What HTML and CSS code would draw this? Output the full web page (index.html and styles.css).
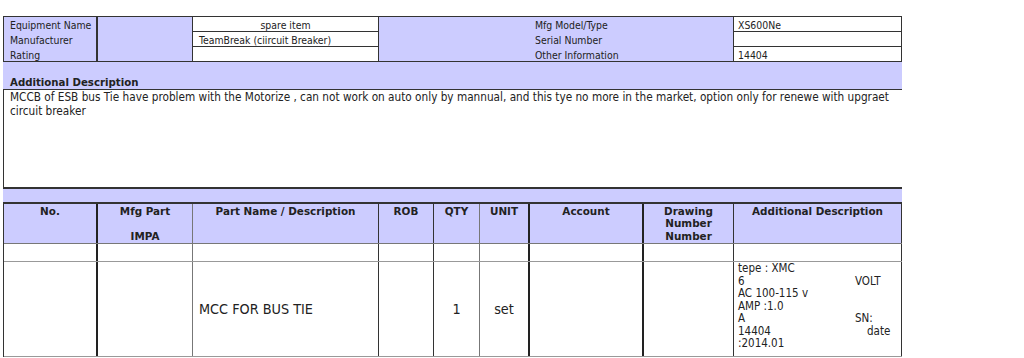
FILE: index.html
```html
<!DOCTYPE html>
<html>
<head>
<meta charset="UTF-8">
<title>Spare Part Requisition</title>
<link rel="stylesheet" href="styles.css">
</head>
<body>
<div class="sheet">

    <!-- equipment block -->
    <div class="equip">
        <div class="lbl">Equipment Name</div>
        <div class="blank c2"></div>
        <div class="val c3 center line">spare item</div>
        <div class="blank"></div>
        <div class="lbl c5">Mfg Model/Type</div>
        <div class="val c6 line">XS600Ne</div>

        <div class="lbl">Manufacturer</div>
        <div class="blank c2"></div>
        <div class="val c3 line">TeamBreak (ciircuit Breaker)</div>
        <div class="blank"></div>
        <div class="lbl c5">Serial Number</div>
        <div class="val c6 line"></div>

        <div class="lbl">Rating</div>
        <div class="blank c2"></div>
        <div class="val c3"></div>
        <div class="blank"></div>
        <div class="lbl c5">Other Information</div>
        <div class="val c6">14404</div>
    </div>

    <div class="band caption">Additional Description</div>
    <div class="desc">MCCB of ESB bus Tie have problem with the Motorize , can not work on auto only by mannual, and this tye no more in the market, option only for renewe with upgraet circuit breaker</div>
    <div class="band spacer"></div>

    <!-- parts list -->
    <div class="parts">
        <div class="row head">
            <div class="cell">No.</div>
            <div class="cell">Mfg Part<br><br>IMPA</div>
            <div class="cell">Part Name / Description</div>
            <div class="cell">ROB</div>
            <div class="cell">QTY</div>
            <div class="cell">UNIT</div>
            <div class="cell">Account</div>
            <div class="cell">Drawing<br>Number<br>Number</div>
            <div class="cell">Additional Description</div>
        </div>
        <div class="row empty">
            <div class="cell"></div>
            <div class="cell"></div>
            <div class="cell"></div>
            <div class="cell"></div>
            <div class="cell"></div>
            <div class="cell"></div>
            <div class="cell"></div>
            <div class="cell"></div>
            <div class="cell"></div>
        </div>
        <div class="row item">
            <div class="cell"></div>
            <div class="cell"></div>
            <div class="cell name">MCC FOR BUS TIE</div>
            <div class="cell"></div>
            <div class="cell num">1</div>
            <div class="cell num">set</div>
            <div class="cell"></div>
            <div class="cell"></div>
            <div class="cell spec">
                <div>tepe : XMC</div>
                <div class="pair"><span>6</span><span>VOLT</span></div>
                <div>AC 100-115 v</div>
                <div>AMP :1.0</div>
                <div class="pair"><span>A</span><span>SN:</span></div>
                <div class="pair"><span>14404</span><span class="far">date</span></div>
                <div>:2014.01</div>
            </div>
        </div>
    </div>

</div>
</body>
</html>
```

FILE: styles.css
```css
body {
    margin: 0;
    background: #fff;
    color: #222;
    font-family: "DejaVu Sans Condensed", "DejaVu Sans", sans-serif;
    font-stretch: condensed;
    font-size: 10.4px;
}

.sheet {
    width: 899px;
    margin: 16px 0 0 3px;
}

/* equipment block */
.equip {
    display: grid;
    grid-template-columns: 94px 95px 186px 155px 200px 167px;
    grid-template-rows: 15px 15px 14px;
    border: 1px solid #333;
    background: #ccccff;
}

.equip > div {
    box-sizing: border-box;
    line-height: 14px;
    padding: 1px 6px 0;
    white-space: nowrap;
    overflow: hidden;
}

.equip .lbl:first-child,
.equip .lbl:nth-child(7),
.equip .lbl:nth-child(13) {
    border-right: 2px solid #333;
}

.equip .c2,
.equip .c3,
.equip .c5 {
    border-right: 1px solid #333;
}

.equip .c5 {
    padding-left: 1px;
}

.equip .val {
    background: #fff;
}

.equip .c6 {
    padding-left: 4px;
}

.equip .line {
    border-bottom: 1px solid #333;
}

.center {
    text-align: center;
}

/* lavender strips */
.band {
    background: #ccccff;
}

.caption {
    height: 27px;
    box-sizing: border-box;
    padding: 15px 0 0 7px;
    line-height: 12px;
    font-family: "DejaVu Sans", sans-serif;
    font-stretch: normal;
    font-size: 10.2px;
    font-weight: bold;
}

.spacer {
    height: 13px;
}

.desc {
    height: 97px;
    padding: 0 6px;
    font-size: 11.7px;
    line-height: 14px;
    border-top: 1px solid #333;
    border-left: 1px solid #333;
    border-bottom: 2px solid #333;
}

/* parts list */
.parts {
    border-top: 2px solid #333;
    border-left: 1px solid #333;
}

.row {
    display: grid;
    grid-template-columns: 94px 95px 186px 55px 46px 50px 114px 90px 168px;
    box-sizing: border-box;
}

.cell {
    box-sizing: border-box;
    border-right: 1px solid #333;
}

.cell:nth-child(1),
.cell:nth-child(6),
.cell:nth-child(7) {
    border-right: 2px solid #222;
}

.cell:nth-child(2),
.cell:nth-child(5) {
    border-right-color: #777;
}

.head {
    height: 40px;
    background: #ccccff;
    border-bottom: 1px solid #777;
}

.head .cell {
    padding-top: 1px;
    line-height: 12.3px;
    text-align: center;
    font-family: "DejaVu Sans", sans-serif;
    font-stretch: normal;
    font-size: 10.4px;
    font-weight: bold;
}

.empty {
    height: 18px;
    border-bottom: 1px solid #999;
}

.item {
    height: 95px;
    border-bottom: 1px solid #999;
}

.item .name,
.item .num {
    display: flex;
    align-items: center;
    font-size: 14.3px;
}

.item .name {
    padding-left: 6px;
}

.item .num {
    justify-content: center;
}

.spec {
    padding: 0 4px;
    font-size: 11.5px;
    line-height: 12.5px;
}

.spec .pair {
    display: grid;
    grid-template-columns: 117px auto;
}

.spec .far {
    padding-left: 12px;
}
```
